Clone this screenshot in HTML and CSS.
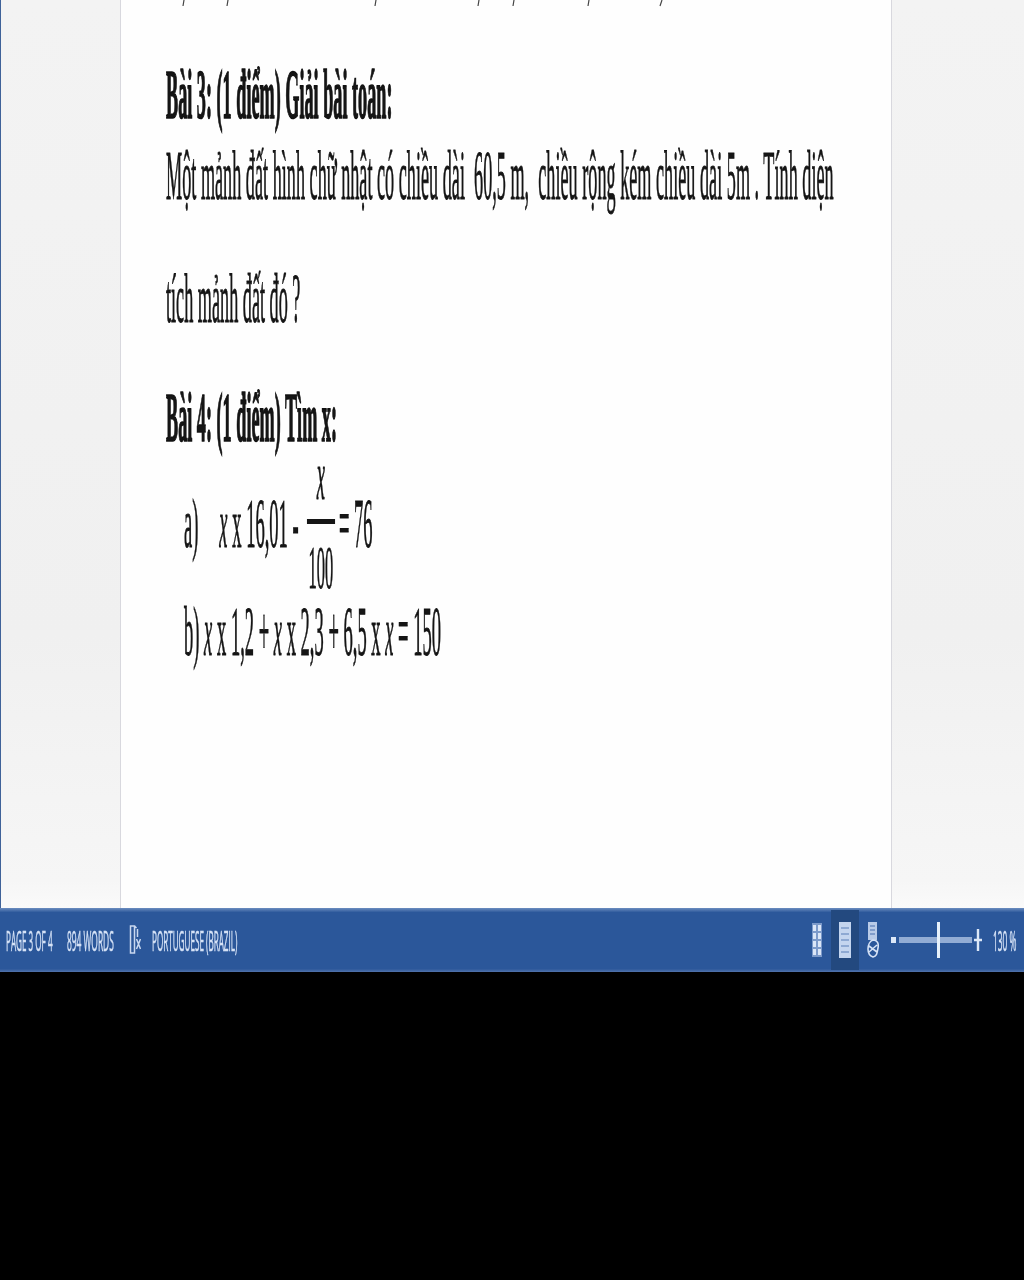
FILE: index.html
```html
<!DOCTYPE html>
<html lang="vi">
<head>
<meta charset="utf-8">
<title>Word</title>
<link rel="stylesheet" href="styles.css">
</head>
<body>
<div class="window">
  <div class="canvas">
    <div class="side side-left"></div>
    <main class="page">
      <svg class="ticks" width="772" height="8" viewBox="0 0 772 8" aria-hidden="true">
        <path d="M63 0l-1 6M107 0l-1 6M255 0l-1 6M358 0l-1 6M393 0l-1 6M468 0l-1 6M541 0l-2 6" stroke="#444" stroke-width="1.2" fill="none"/>
      </svg>
      <div class="line bold l-b3">Bài 3: (1 điểm) Giải bài toán:</div>
      <div class="line l-p1">Một mảnh đất hình chữ nhật có chiều dài&nbsp; 60,5 m,&nbsp; chiều rộng kém chiều dài 5m . Tính diện</div>
      <div class="line l-p2">tích mảnh đất đó ?</div>
      <div class="line bold l-b4">Bài 4: (1 điểm) Tìm x:</div>
      <div class="line l-a">
        <span class="marker">a)</span><span><i>x</i> x 16,01 -</span>
        <span class="frac"><i class="num">x</i><span class="bar"></span><span class="den">100</span></span>
        <span>= 76</span>
      </div>
      <div class="line l-bb">b) <i>x</i> x 1,2 + <i>x</i> x 2,3 + 6,5 x <i>x</i> = 150</div>
    </main>
    <div class="side"></div>
  </div>
  <footer class="status">
    <span class="st">PAGE 3 OF 4</span>
    <span class="st">894 WORDS</span>
    <svg class="proof" width="12" height="34" viewBox="0 0 12 34" aria-hidden="true">
      <path d="M1.5 3h4v27h-4zM5.5 3l2 2M8.5 6v8" stroke="#c9d8f0" stroke-width="1.5" fill="none"/>
      <path d="M7.5 16l4 10M11.5 16l-4 10" stroke="#c9d8f0" stroke-width="1.5" fill="none"/>
    </svg>
    <span class="st">PORTUGUESE (BRAZIL)</span>
    <span class="grow"></span>
    <svg class="view" width="12" height="36" viewBox="0 0 12 36" aria-hidden="true">
      <path d="M1 1h10v34H1z" fill="#7c9aca"/>
      <path d="M2 3h3v6H2zM7 3h3v6H7zM2 11h3v6H2zM7 11h3v6H7zM2 19h3v6H2zM7 19h3v6H7zM2 27h3v6H2zM7 27h3v6H7z" fill="#dbe6f7"/>
    </svg>
    <div class="view-on">
      <svg width="12" height="36" viewBox="0 0 12 36" aria-hidden="true">
        <path d="M0 0h12v36H0z" fill="#c4d5ef"/>
        <path d="M2 6h8M2 12h8M2 18h8M2 24h8M2 30h8" stroke="#7c9aca" stroke-width="1.6"/>
      </svg>
    </div>
    <svg class="view" width="12" height="38" viewBox="0 0 12 38" aria-hidden="true">
      <path d="M1 1h9v18H1z" fill="#b9cbe8"/>
      <path d="M3 5h5M3 9h5M3 13h5" stroke="#4a70ad" stroke-width="1.2"/>
      <path d="M6 19c4 0 6 3 5 8s-1 8-5 9c-3-1-5-4-5-8s2-8 5-9zM2 25l8 6M10 24l-8 7" fill="none" stroke="#d5e2f6" stroke-width="1.6"/>
    </svg>
    <div class="zoom">
      <span class="minus"></span>
      <div class="track"><span class="thumb"></span></div>
      <svg width="8" height="24" viewBox="0 0 8 24" aria-hidden="true">
        <path d="M4 1v22M0 12h8" stroke="#dce8f8" stroke-width="2.4"/>
      </svg>
    </div>
    <span class="st pct">130 %</span>
  </footer>
</div>
</body>
</html>
```

FILE: styles.css
```css
html, body { margin: 0; padding: 0; background: #000; }
body { width: 1024px; height: 1280px; overflow: hidden; }

.window { height: 972px; display: flex; flex-direction: column; overflow: hidden; }

.canvas {
  flex: 1;
  display: flex;
  min-height: 0;
  overflow: hidden;
  border-left: 1px solid #3f6299;
}
.side { flex: 1; background: linear-gradient(#f3f3f3, #f0f0f0 70%, #f6f6f6 97%, #fafafa); }
.side-left { flex: none; width: 119px; }
.page {
  position: relative;
  width: 772px;
  padding-left: 45px;
  box-sizing: border-box;
  background: #fefefe;
  border-left: 1px solid #d8d8de;
  border-right: 1px solid #d8d8de;
  overflow: hidden;
  flex: none;
}
.ticks { position: absolute; left: 0; top: 0; filter: blur(.4px); }

.line {
  font-family: "Liberation Serif", serif;
  font-size: 70px;
  line-height: 70px;
  height: 70px;
  width: max-content;
  color: #151515;
  white-space: nowrap;
  -webkit-text-stroke: .9px #151515;
  transform-origin: left center;
  transform: scaleX(.26);
  filter: blur(.6px);
}
.bold { font-weight: 700; -webkit-text-stroke: 1.6px #111; }
.l-b3 { margin-top: 60px; }
.l-p1 { margin-top: 11px; }
.l-p2 { margin-top: 53px; }
.l-b4 { margin-top: 49px; }

.l-a {
  margin: 1px 0 0 18px;
  height: 140px;
  display: flex;
  align-items: center;
  gap: 19px;
  transform: scaleX(.265);
}
.marker { margin-right: 60px; }
.frac {
  display: flex;
  flex-direction: column;
  align-items: center;
  width: 106px;
  margin: 0 -4px 0 12px;
}
.num { line-height: 30px; height: 30px; margin-bottom: 28px; }
.den { font-size: 62px; line-height: 40px; height: 40px; margin-top: 23px; }
.bar { display: block; width: 106px; height: 5px; background: #151515; flex: none; }
.l-bb { margin: 3px 0 0 18px; transform: scaleX(.265); }

.status {
  flex: none;
  height: 64px;
  display: flex;
  align-items: center;
  padding: 0 7px 0 6px;
  background: linear-gradient(#6c8dc0, #2b579a 7%, #2b579a 95%, #5273ab);
  color: #d5e2f6;
}
.st {
  font-family: "Open Sans", sans-serif;
  font-size: 28px;
  line-height: 32px;
  white-space: nowrap;
  display: block;
  transform-origin: left center;
  transform: scaleX(.29);
  -webkit-text-stroke: .5px #d5e2f6;
  filter: blur(.4px);
  flex: none;
}
.st:nth-child(1) { width: 47px; margin-right: 14px; }
.st:nth-child(2) { width: 48px; margin-right: 14px; transform: scaleX(.3); }
.st:nth-child(4) { width: 86px; }
.proof { flex: none; margin-right: 11px; filter: blur(.4px); }
.grow { flex: 1; }
.view { flex: none; filter: blur(.5px); }
.view-on {
  flex: none;
  width: 28px;
  height: 60px;
  margin: 0 8px;
  background: #23497f;
  display: flex;
  align-items: center;
  justify-content: center;
  filter: blur(.3px);
}
.zoom { display: flex; align-items: center; margin: 0 11px 0 12px; flex: none; filter: blur(.3px); }
.minus { width: 5px; height: 6px; background: #dce8f8; margin-right: 3px; }
.track {
  position: relative;
  width: 73px;
  height: 6px;
  background: #92acd4;
  margin-right: 2px;
}
.thumb {
  position: absolute;
  left: 38px;
  top: -15px;
  width: 3px;
  height: 36px;
  background: #e6f0fa;
}
.st.pct { width: 24px; transform: scaleX(.3); }
```
